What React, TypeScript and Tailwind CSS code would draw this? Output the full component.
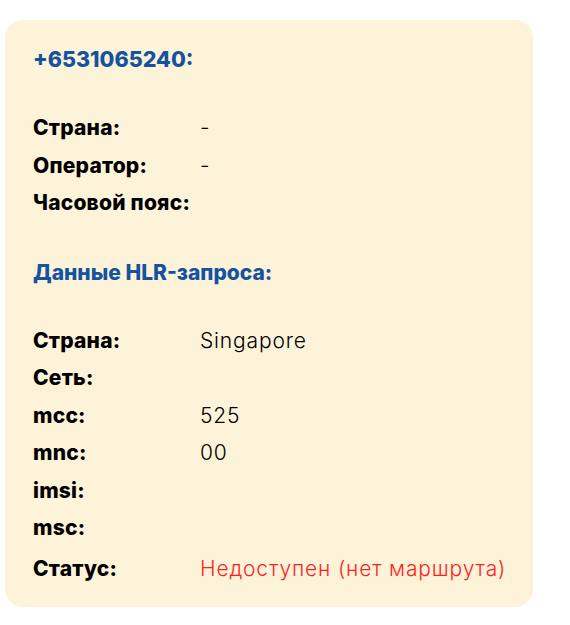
import React from "react";

const Label = ({ children }: { children: React.ReactNode }) => (
  <div className="w-[167px] shrink-0 font-extrabold text-[21px] tracking-[0.01em] text-black">{children}</div>
);

const Row = ({ label, value }: { label: string; value?: string }) => (
  <div className="flex items-center h-[37.5px]">
    <Label>{label}</Label>
    {value !== undefined && <div className="font-light text-[21px] tracking-[0.04em] text-black">{value}</div>}
  </div>
);

export default function App() {
  return (
    <div className="w-[570px] h-[625px] bg-white pt-[20px] pl-[5px]" style={{ fontFamily: "Inter, 'Noto Sans', sans-serif" }}>
      <div className="w-[528px] h-[587px] bg-[#fdf3d8] rounded-[18px] pl-[28px] pt-[24px] flex flex-col">
        <div className="h-[30px] flex items-center text-[#1553a0] font-extrabold text-[21.5px]">+6531065240:</div>
        <div className="mt-[35px] flex flex-col">
          <Row label="Страна:" value="-" />
          <Row label="Оператор:" value="-" />
          <Row label="Часовой пояс:" />
        </div>
        <div className="mt-[36px] h-[30px] flex items-center text-[#1553a0] font-extrabold text-[21px]">Данные HLR-запроса:</div>
        <div className="mt-[34px] flex flex-col">
          <Row label="Страна:" value="Singapore" />
          <Row label="Сеть:" />
          <Row label="mcc:" value="525" />
          <Row label="mnc:" value="00" />
          <Row label="imsi:" />
          <Row label="msc:" />
          <div className="flex items-center h-[37.5px] mt-[3.5px]">
            <Label>Статус:</Label>
            <div className="font-light text-[21px] tracking-[0.04em] text-[#ff1f1f]">Недоступен (нет маршрута)</div>
          </div>
        </div>
      </div>
    </div>
  );
}
